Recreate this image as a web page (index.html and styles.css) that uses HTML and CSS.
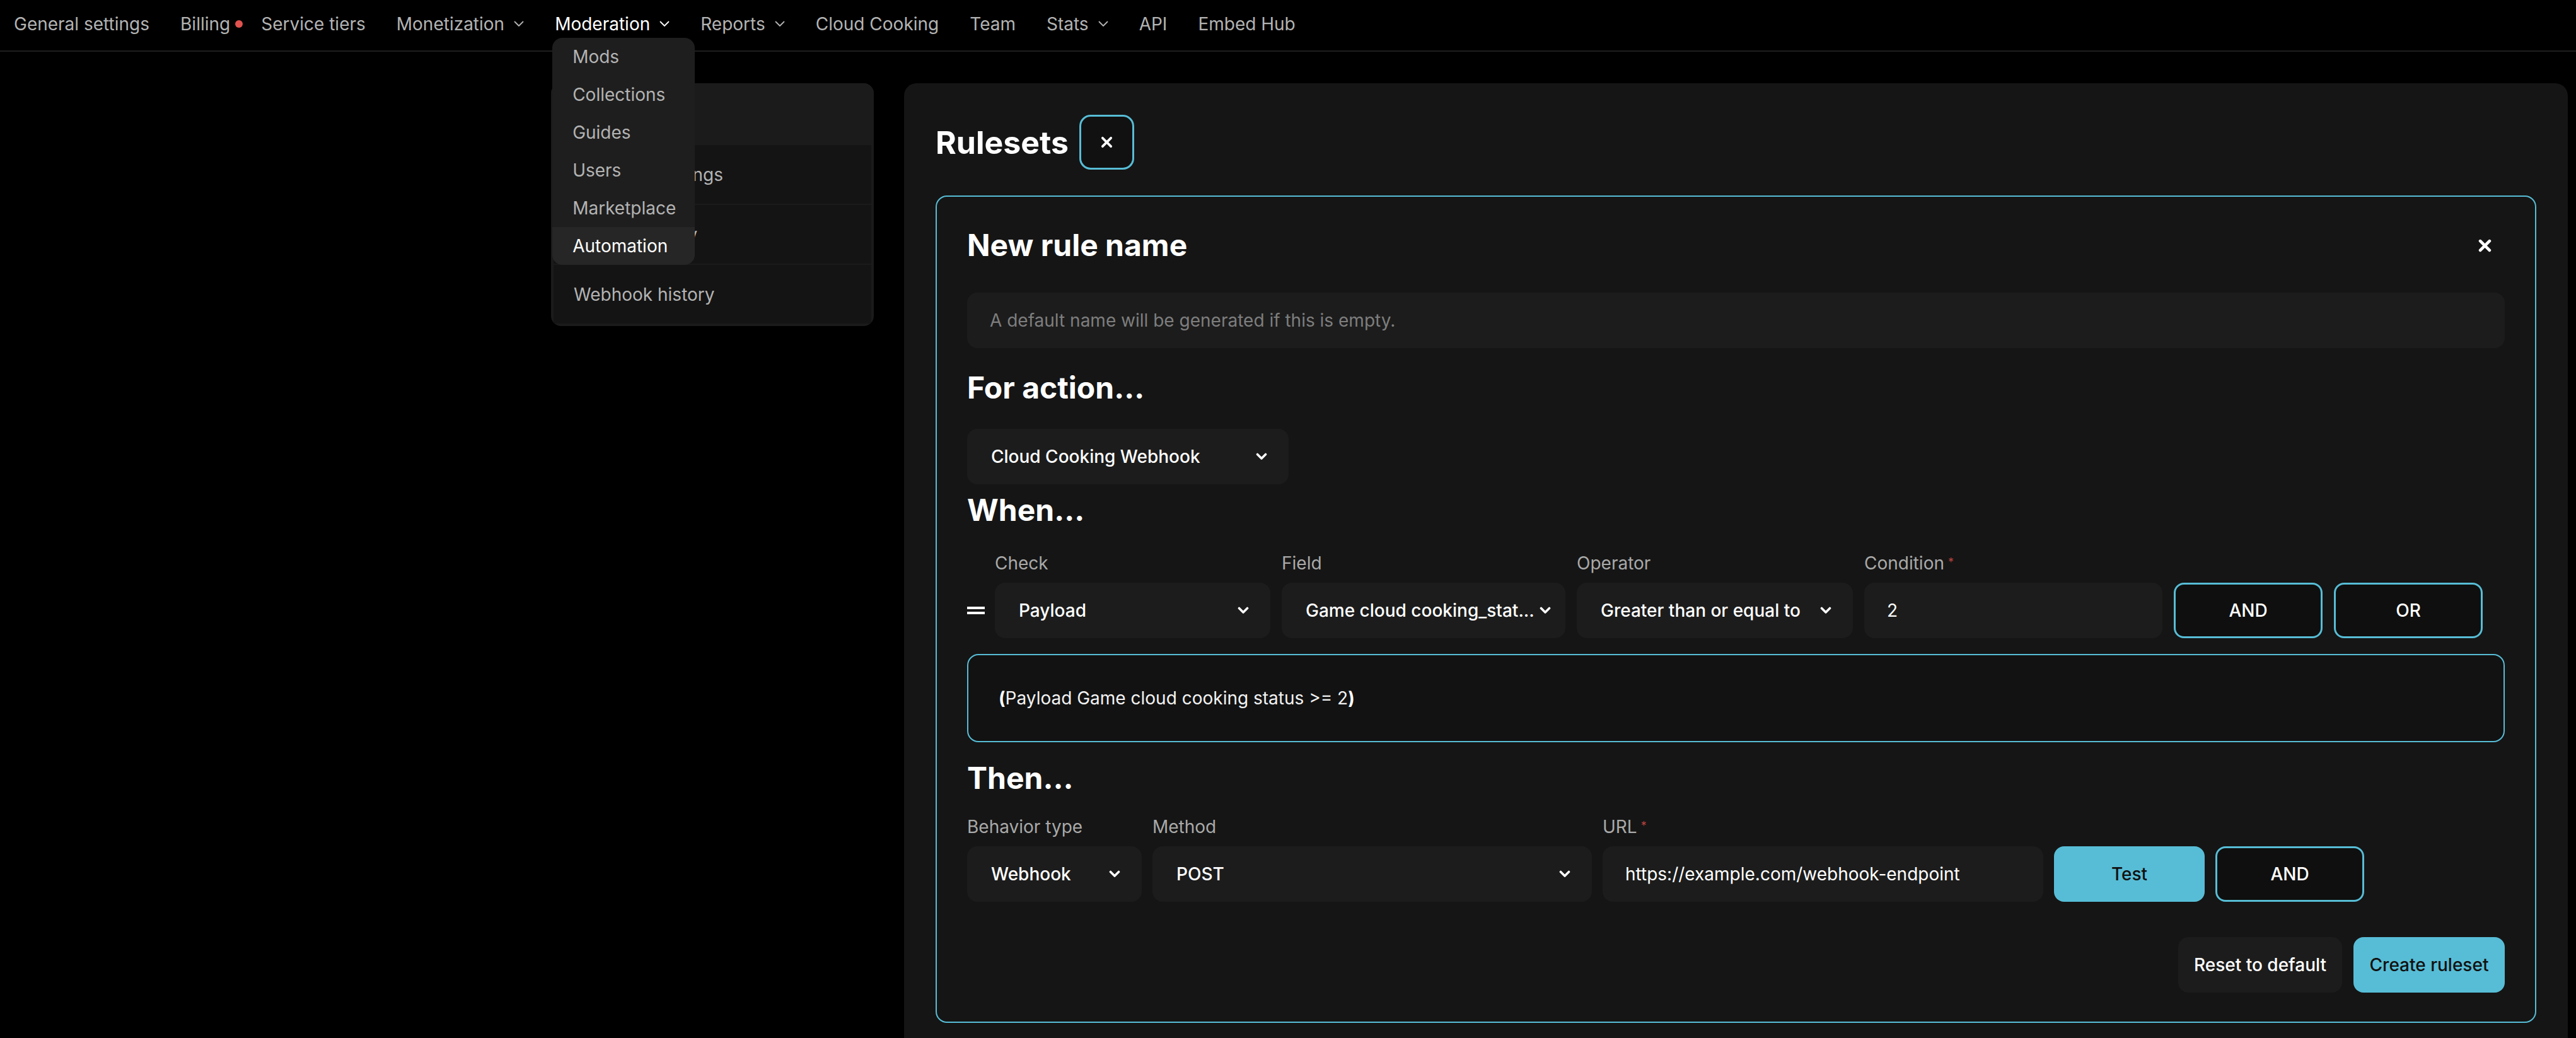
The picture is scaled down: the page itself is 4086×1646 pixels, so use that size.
FILE: index.html
```html
<!DOCTYPE html>
<html lang="en">
<head>
    <meta charset="UTF-8">
    <meta name="viewport" content="width=device-width, initial-scale=1.0">
    <title>Automation - Rulesets</title>
    <link rel="stylesheet" href="styles.css">
</head>
<body>
    <header class="topnav">
        <a href="#" class="nav-link">General settings</a>
        <a href="#" class="nav-link">Billing<span class="dot"></span></a>
        <a href="#" class="nav-link">Service tiers</a>
        <a href="#" class="nav-link">Monetization
            <svg class="nav-chevron" viewBox="0 0 16 10"><polyline points="1.5,1.5 8,8 14.5,1.5"/></svg>
        </a>
        <div class="nav-menu">
            <a href="#" class="nav-link active">Moderation
                <svg class="nav-chevron" viewBox="0 0 16 10"><polyline points="1.5,1.5 8,8 14.5,1.5"/></svg>
            </a>
            <div class="dropdown">
                <a href="#" class="dropdown-item">Mods</a>
                <a href="#" class="dropdown-item">Collections</a>
                <a href="#" class="dropdown-item">Guides</a>
                <a href="#" class="dropdown-item">Users</a>
                <a href="#" class="dropdown-item">Marketplace</a>
                <a href="#" class="dropdown-item current">Automation</a>
            </div>
        </div>
        <a href="#" class="nav-link">Reports
            <svg class="nav-chevron" viewBox="0 0 16 10"><polyline points="1.5,1.5 8,8 14.5,1.5"/></svg>
        </a>
        <a href="#" class="nav-link">Cloud Cooking</a>
        <a href="#" class="nav-link">Team</a>
        <a href="#" class="nav-link">Stats
            <svg class="nav-chevron" viewBox="0 0 16 10"><polyline points="1.5,1.5 8,8 14.5,1.5"/></svg>
        </a>
        <a href="#" class="nav-link">API</a>
        <a href="#" class="nav-link">Embed Hub</a>
    </header>

    <div class="layout">
        <aside class="side-card">
            <a href="#" class="side-item active">Rulesets</a>
            <a href="#" class="side-item">Webhook settings</a>
            <a href="#" class="side-item">Ruleset history</a>
            <a href="#" class="side-item">Webhook history</a>
        </aside>

        <main class="panel">
            <div class="panel-head">
                <h1 class="panel-title">Rulesets</h1>
                <button class="square-btn" aria-label="Close">
                    <svg class="x-icon" viewBox="0 0 20 20"><path d="M3 3 L17 17 M17 3 L3 17"/></svg>
                </button>
            </div>

            <section class="rule-card">
                <div class="rule-head">
                    <h2 class="section-title">New rule name</h2>
                    <button class="close-btn" aria-label="Discard">
                        <svg class="x-icon big" viewBox="0 0 20 20"><path d="M3 3 L17 17 M17 3 L3 17"/></svg>
                    </button>
                </div>
                <div class="text-input name-input">
                    <span class="placeholder">A default name will be generated if this is empty.</span>
                </div>

                <h2 class="section-title for-action">For action...</h2>
                <div class="select action-select">
                    <span class="value">Cloud Cooking Webhook</span>
                    <svg class="chevron" viewBox="0 0 18 12"><polyline points="2.5,2.5 9,9 15.5,2.5"/></svg>
                </div>

                <h2 class="section-title when">When...</h2>
                <div class="cond-row">
                    <div class="handle">
                        <svg viewBox="0 0 28 16"><rect x="0" y="2" width="28" height="4"/><rect x="0" y="10" width="28" height="4"/></svg>
                    </div>
                    <div class="field w-check">
                        <span class="field-label">Check</span>
                        <div class="select">
                            <span class="value">Payload</span>
                            <svg class="chevron" viewBox="0 0 18 12"><polyline points="2.5,2.5 9,9 15.5,2.5"/></svg>
                        </div>
                    </div>
                    <div class="field w-field">
                        <span class="field-label">Field</span>
                        <div class="select">
                            <span class="value">Game cloud cooking_stat...</span>
                            <svg class="chevron" viewBox="0 0 18 12"><polyline points="2.5,2.5 9,9 15.5,2.5"/></svg>
                        </div>
                    </div>
                    <div class="field w-operator">
                        <span class="field-label">Operator</span>
                        <div class="select">
                            <span class="value">Greater than or equal to</span>
                            <svg class="chevron" viewBox="0 0 18 12"><polyline points="2.5,2.5 9,9 15.5,2.5"/></svg>
                        </div>
                    </div>
                    <div class="field w-condition">
                        <span class="field-label">Condition<span class="req">*</span></span>
                        <div class="text-input value-input">2</div>
                    </div>
                    <button class="btn btn-outline">AND</button>
                    <button class="btn btn-outline">OR</button>
                </div>

                <div class="summary">
                    <b>(</b>Payload Game cloud cooking status &gt;= 2<b>)</b>
                </div>

                <h2 class="section-title then">Then...</h2>
                <div class="then-row">
                    <div class="field w-behavior">
                        <span class="field-label">Behavior type</span>
                        <div class="select">
                            <span class="value">Webhook</span>
                            <svg class="chevron" viewBox="0 0 18 12"><polyline points="2.5,2.5 9,9 15.5,2.5"/></svg>
                        </div>
                    </div>
                    <div class="field w-method">
                        <span class="field-label">Method</span>
                        <div class="select">
                            <span class="value">POST</span>
                            <svg class="chevron" viewBox="0 0 18 12"><polyline points="2.5,2.5 9,9 15.5,2.5"/></svg>
                        </div>
                    </div>
                    <div class="field w-url">
                        <span class="field-label">URL<span class="req">*</span></span>
                        <div class="text-input value-input">https://example.com/webhook-endpoint</div>
                    </div>
                    <button class="btn btn-primary w-test">Test</button>
                    <button class="btn btn-outline">AND</button>
                </div>

                <div class="rule-footer">
                    <button class="btn btn-plain w-reset">Reset to default</button>
                    <button class="btn btn-primary w-create">Create ruleset</button>
                </div>
            </section>
        </main>
    </div>
</body>
</html>
```

FILE: styles.css
```css
body {
    margin: 0;
    background-color: #000000;
    color: #ffffff;
    font-family: Inter, "Noto Sans", sans-serif;
    font-size: 28px;
    line-height: 34px;
}

/* top navigation */
.topnav {
    display: flex;
    align-items: center;
    gap: 49px;
    height: 82px;
    box-sizing: border-box;
    padding: 0 22px 4px;
    border-bottom: 2px solid #1e1e1e;
}

.nav-link {
    position: relative;
    display: flex;
    align-items: center;
    gap: 15px;
    color: #b3b3b3;
    text-decoration: none;
    white-space: nowrap;
}

.nav-link.active {
    color: #ffffff;
}

.nav-chevron {
    width: 16px;
    height: 10px;
    fill: none;
    stroke: currentColor;
    stroke-width: 1.8;
    stroke-linecap: round;
    stroke-linejoin: round;
}

.dot {
    position: absolute;
    right: -20px;
    top: 50%;
    width: 12px;
    height: 12px;
    margin-top: -6px;
    border-radius: 50%;
    background-color: #e0524f;
}

.nav-menu {
    position: relative;
}

.dropdown {
    position: absolute;
    left: -4px;
    top: calc(100% + 5px);
    width: 226px;
    display: flex;
    flex-direction: column;
    background-color: #1e1e1e;
    border-radius: 16px;
    overflow: hidden;
    z-index: 10;
}

.dropdown-item {
    height: 60px;
    display: flex;
    align-items: center;
    padding-left: 32px;
    color: #b3b3b3;
    text-decoration: none;
}

.dropdown-item.current {
    background-color: #262626;
    color: #ffffff;
}

/* page layout */
.layout {
    display: grid;
    grid-template-columns: 512px 1fr;
    gap: 48px;
    align-items: start;
    padding: 50px 13px 0 874px;
}

.side-card {
    display: flex;
    flex-direction: column;
    gap: 2px;
    padding: 0 4px 4px;
    background-color: #1b1b1b;
    border-radius: 16px;
    overflow: hidden;
}

.side-item {
    height: 93px;
    display: flex;
    align-items: center;
    padding-left: 32px;
    background-color: #141414;
    color: #b3b3b3;
    text-decoration: none;
}

.side-item.active {
    height: 96px;
    margin: 0 -4px;
    padding-left: 36px;
    background-color: #1b1b1b;
    color: #ffffff;
}

.panel {
    min-width: 0;
    padding: 50px;
    background-color: #151515;
    border-radius: 20px;
}

.panel-head {
    display: flex;
    align-items: center;
    gap: 17px;
}

.panel-title {
    margin: 0;
    font-size: 50px;
    line-height: 60px;
    font-weight: 700;
}

button {
    font: inherit;
    color: inherit;
    cursor: pointer;
}

.square-btn {
    width: 87px;
    height: 87px;
    display: grid;
    place-items: center;
    padding: 0;
    background-color: #111111;
    border: 3px solid #57bdd6;
    border-radius: 18px;
}

.x-icon {
    width: 19px;
    height: 19px;
    fill: none;
    stroke: #ffffff;
    stroke-width: 4;
    stroke-linecap: round;
}

.x-icon.big {
    width: 21px;
    height: 21px;
    stroke-width: 4.5;
}

/* rule editor card */
.rule-card {
    margin-top: 41px;
    padding: 48px 48px 46px;
    border: 2px solid #57bdd6;
    border-radius: 18px;
}

.rule-head {
    display: flex;
    justify-content: space-between;
    align-items: center;
}

.section-title {
    margin: 0;
    font-size: 48px;
    line-height: 58px;
    font-weight: 700;
}

.close-btn {
    width: 64px;
    height: 58px;
    display: grid;
    place-items: center;
    padding: 0;
    background: none;
    border: none;
}

.text-input {
    height: 88px;
    box-sizing: border-box;
    display: flex;
    align-items: center;
    padding: 0 36px;
    background-color: #1c1c1c;
    border-radius: 16px;
    white-space: nowrap;
}

.name-input {
    margin-top: 46px;
}

.placeholder {
    color: #7e7e7e;
}

.for-action {
    margin-top: 34px;
}

.when {
    margin-top: 12px;
}

.then {
    margin-top: 28px;
}

.select {
    height: 88px;
    box-sizing: border-box;
    display: flex;
    align-items: center;
    justify-content: space-between;
    gap: 8px;
    padding: 0 34px 0 38px;
    background-color: #1c1c1c;
    border-radius: 16px;
    font-weight: 500;
}

.select .value {
    white-space: nowrap;
}

.chevron {
    flex: none;
    width: 18px;
    height: 12px;
    fill: none;
    stroke: #ffffff;
    stroke-width: 3.6;
    stroke-linecap: round;
    stroke-linejoin: round;
}

.action-select {
    width: 510px;
    margin-top: 36px;
}

.cond-row,
.then-row {
    display: flex;
    align-items: flex-end;
    gap: 18px;
}

.cond-row {
    margin-top: 38px;
}

.then-row {
    margin-top: 31px;
    gap: 17px;
}

.handle {
    width: 28px;
    height: 88px;
    display: flex;
    align-items: center;
    margin-right: -2px;
}

.handle svg {
    width: 28px;
    height: 16px;
    fill: #ffffff;
}

.field {
    display: flex;
    flex-direction: column;
    gap: 14px;
}

.field-label {
    height: 34px;
    color: #a9a9a9;
}

.req {
    position: relative;
    top: -5px;
    margin-left: 6px;
    font-size: 18px;
    color: #b5423e;
}

.value-input {
    padding-left: 36px;
}

.w-check { width: 437px; }
.w-field { width: 450px; }
.w-operator { width: 438px; }
.w-condition { width: 473px; }
.w-behavior { width: 277px; }
.w-method { width: 697px; }
.w-url { width: 699px; }

.btn {
    height: 88px;
    box-sizing: border-box;
    padding: 0;
    border-radius: 16px;
    font-weight: 500;
}

.btn-outline {
    width: 236px;
    background-color: #0f0f0f;
    border: 3px solid #57bdd6;
    color: #ffffff;
}

.btn-primary {
    background-color: #57bdd6;
    border: none;
    color: #101010;
}

.btn-plain {
    background-color: #1c1c1c;
    border: none;
    color: #ffffff;
}

.w-test { width: 239px; }
.w-reset { width: 260px; }
.w-create { width: 240px; }

.summary {
    margin-top: 25px;
    padding: 51px 48px;
    background-color: #121212;
    border: 2px solid #57bdd6;
    border-radius: 18px;
    color: #f2f2f2;
}

.summary b {
    color: #ffffff;
}

.rule-footer {
    display: flex;
    justify-content: flex-end;
    gap: 18px;
    margin-top: 56px;
}
```
